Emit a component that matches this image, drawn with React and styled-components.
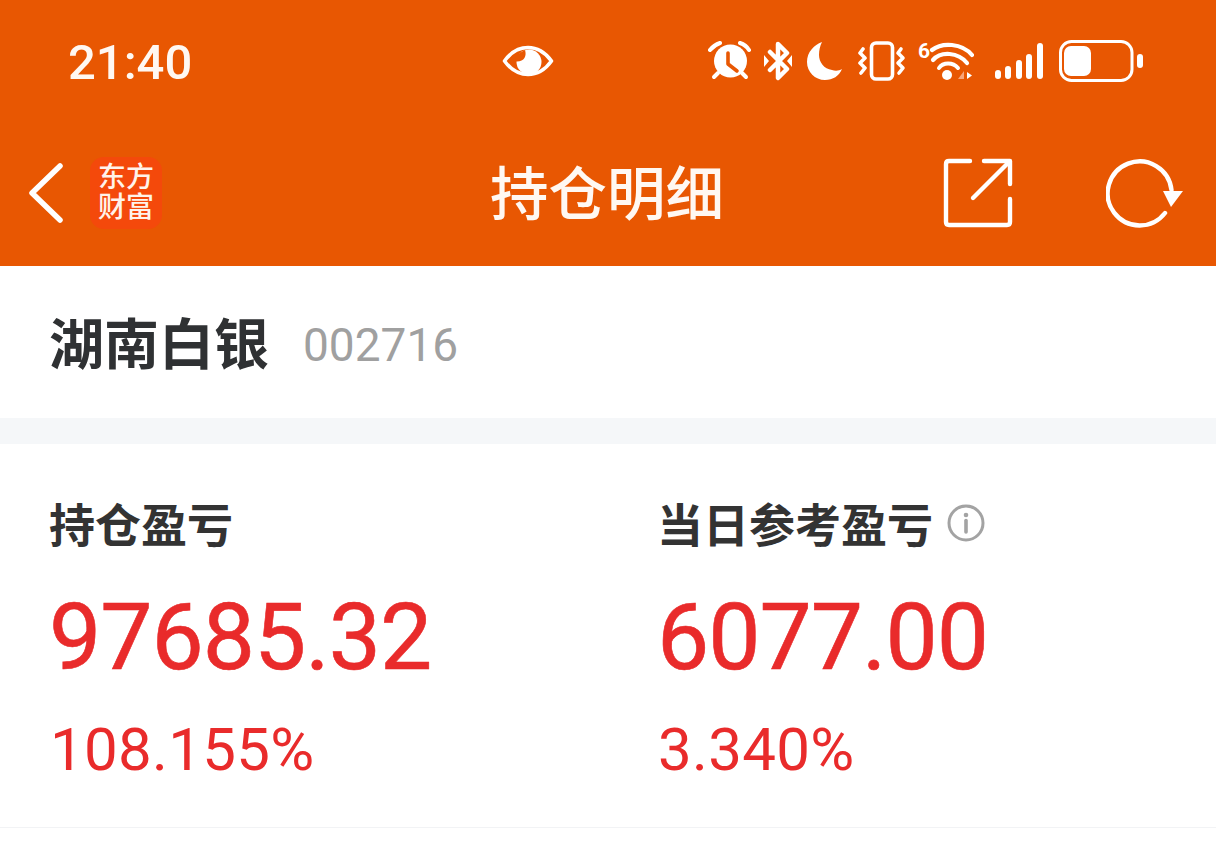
import React from "react";
import styled, { createGlobalStyle } from "styled-components";

const GlobalStyle = createGlobalStyle`
  html, body {
    margin: 0;
    padding: 0;
    background: #ffffff;
    font-family: Roboto, "Noto Sans CJK SC", sans-serif;
  }
`;

const Page = styled.div`
  width: 1216px;
  height: 854px;
  overflow: hidden;
  background: #ffffff;
`;

const TopArea = styled.div`
  background: #e85702;
  height: 266px;
  color: #ffffff;
`;

const StatusBar = styled.div`
  height: 122px;
  display: grid;
  grid-template-columns: 434px 124px 1fr;
  align-items: center;
  padding-left: 68px;
  padding-right: 73px;
`;

const Time = styled.div`
  font-size: 49px;
  font-weight: 500;
  line-height: 1;
  margin-top: 3px;
  color: #fff8f2;
`;

const StatusIcons = styled.div`
  display: flex;
  justify-content: flex-end;
  align-items: center;
  height: 50px;
`;

const Icon = styled.svg`
  display: block;
  flex: none;
  margin-left: ${(p) => p.$ml || 0}px;
  margin-bottom: ${(p) => p.$mb || 0}px;
`;

const NavBar = styled.div`
  height: 144px;
  display: grid;
  grid-template-columns: 1fr auto 1fr;
  align-items: center;
  padding: 0 32px 0 28px;
`;

const NavLeft = styled.div`
  display: flex;
  align-items: center;
  gap: 26px;
  margin-top: -2px;
`;

const NavRight = styled.div`
  display: flex;
  justify-content: flex-end;
  align-items: center;
  gap: 93px;
  margin-top: -2px;
`;

const Logo = styled.div`
  width: 72px;
  height: 72px;
  border-radius: 14px;
  background: #f4490b;
  display: grid;
  grid-template-columns: 28px 28px;
  justify-content: center;
  align-content: center;
  font-size: 28px;
  line-height: 30px;
  font-weight: 500;
  text-align: center;
  color: #fff3ea;
`;

const Title = styled.div`
  font-size: 58.5px;
  line-height: 1;
  font-weight: 500;
  margin-top: 2px;
  padding-left: 2px;
  color: #fff8f2;
`;

const StockRow = styled.div`
  height: 152px;
  box-sizing: border-box;
  padding: 6px 0 0 49px;
  display: flex;
  align-items: center;
  gap: 34px;
`;

const StockName = styled.div`
  font-size: 55px;
  font-weight: 700;
  line-height: 1;
  color: #2f3133;
`;

const StockCode = styled.div`
  font-size: 46px;
  line-height: 1;
  color: #a0a0a0;
`;

const Gap = styled.div`
  height: 26px;
  background: #f5f7f9;
`;

const Stats = styled.div`
  height: 383px;
  display: grid;
  grid-template-columns: 608px 1fr;
  padding-left: 50px;
  border-bottom: 1px solid #f2f3f5;
`;

const Stat = styled.div`
  display: flex;
  flex-direction: column;
  padding-top: 57px;
`;

const LabelRow = styled.div`
  display: flex;
  align-items: center;
  height: 50px;
  gap: 14px;
  margin-left: -1px;
`;

const Label = styled.div`
  font-size: 46px;
  font-weight: 700;
  line-height: 1;
  color: #333333;
`;

const Value = styled.div`
  font-size: 93px;
  font-weight: 400;
  letter-spacing: -1px;
  line-height: 1;
  margin-top: 40px;
  margin-left: -1px;
  color: #e92b2b;
  -webkit-text-stroke: 0.6px #e92b2b;
`;

const Percent = styled.div`
  font-size: 60px;
  letter-spacing: 0.3px;
  line-height: 1;
  margin-top: 36px;
  color: #e92b2b;
`;

const AlarmIcon = () => (
  <Icon width="43" height="42" viewBox="0 0 43 42" fill="none">
    <circle cx="22.500" cy="21" r="16.500" fill="#fff" />
    <path d="M20 13 V24 L29 31" stroke="#e85702" strokeWidth="3.600" strokeLinecap="round" strokeLinejoin="round" />
    <path d="M2 10 Q6 5 12 3 M32 3 Q38 5 41 10" stroke="#fff" strokeWidth="4" strokeLinecap="round" />
    <path d="M10 33 L6 37 M34 33 L38 37" stroke="#fff" strokeWidth="4" strokeLinecap="round" />
  </Icon>
);

const BluetoothIcon = () => (
  <Icon width="30" height="40" viewBox="0 0 30 40" fill="none" $ml={12}>
    <path d="M7 11 L24 28 L15 37 V3 L24 12 L7 29" stroke="#fff" strokeWidth="4.500" strokeLinejoin="round" strokeLinecap="round" />
    <path d="M1 14 L6 20 L1 26 Z M29 14 L24 20 L29 26 Z" fill="#fff" />
  </Icon>
);

const MoonIcon = () => (
  <Icon width="38" height="40" viewBox="0 0 38 40" $ml={13}>
    <path d="M16 1 C8 4 1 11 1 21 C1 31 9 39 19 39 C27 39 33 35 36 28 C33 30 29 30 26 29 C18 28 13 21 13 14 C13 9 14 5 16 1 Z" fill="#fff" />
  </Icon>
);

const VibrateIcon = () => (
  <Icon width="48" height="40" viewBox="0 0 48 40" fill="none" $ml={14}>
    <rect x="13.500" y="2" width="21" height="36" rx="4.500" stroke="#fff" strokeWidth="3.600" />
    <path d="M5 8 L2 12 L7 17 L2 22 L7 27 L3 32" stroke="#fff" strokeWidth="3.600" strokeLinejoin="round" strokeLinecap="round" />
    <path d="M43 8 L40 12 L45 17 L40 22 L45 27 L41 32" stroke="#fff" strokeWidth="3.600" strokeLinejoin="round" strokeLinecap="round" />
  </Icon>
);

const WifiIcon = () => (
  <Icon width="56" height="44" viewBox="0 0 56 44" fill="none" $ml={12}>
    <text x="0" y="19" fill="#fff" fontSize="21" fontWeight="700" fontFamily="Roboto, sans-serif">6</text>
    <path d="M14 11 C24 3 44 4 54 16" stroke="#fff" strokeWidth="4.200" strokeLinecap="round" />
    <path d="M15 21 C23 12 40 13 49 24" stroke="#fff" strokeWidth="4.200" strokeLinecap="round" />
    <path d="M21 29 C25 23 35 23 40 29" stroke="#fff" strokeWidth="4" strokeLinecap="round" />
    <circle cx="29" cy="36" r="5" fill="#fff" />
    <path d="M46 32 V40 H40 Z" fill="#f7a67c" />
    <path d="M49 33 L54 36.500 L49 40 Z" fill="#fff" />
  </Icon>
);

const SignalIcon = () => (
  <Icon width="50" height="40" viewBox="0 0 50 40" $ml={20}>
    <rect x="1" y="29" width="6" height="9" rx="3" fill="#fff" />
    <rect x="11" y="25" width="6" height="13" rx="3" fill="#fff" />
    <rect x="22" y="19" width="6" height="19" rx="3" fill="#fff" />
    <rect x="32" y="13" width="6" height="25" rx="3" fill="#fff" />
    <rect x="43" y="2" width="6" height="36" rx="3" fill="#fff" />
  </Icon>
);

const BatteryIcon = () => (
  <Icon width="84" height="42" viewBox="0 0 84 42" fill="none" $ml={15}>
    <rect x="1.500" y="1.500" width="71.500" height="39" rx="11" stroke="#fff" strokeWidth="3" />
    <rect x="5" y="6" width="27" height="30" rx="7" fill="#fff" />
    <rect x="78" y="14" width="6" height="14" rx="3" fill="#fff" />
  </Icon>
);

const EyeIcon = () => (
  <Icon width="52" height="34" viewBox="0 0 52 34" fill="none">
    <path d="M2.500 17 C9 8 17 3.500 26 3.500 C35 3.500 43 8 49.500 17 C43 26 35 30.500 26 30.500 C17 30.500 9 26 2.500 17 Z" stroke="#fff" strokeWidth="3.600" strokeLinejoin="round" />
    <circle cx="27" cy="18" r="12.500" fill="#fff" />
    <path d="M23 6 C25 12 22 18 14 17.500 L13.500 13 C16 10 19 8 23 6 Z" fill="#e85702" />
  </Icon>
);

const BackIcon = () => (
  <Icon width="36" height="60" viewBox="0 0 36 60" fill="none">
    <path d="M32 3 L4 30 L32 57" stroke="#fff" strokeWidth="5.500" strokeLinecap="round" strokeLinejoin="round" />
  </Icon>
);

const ShareIcon = () => (
  <Icon width="70" height="70" viewBox="0 0 70 70" fill="none">
    <path d="M27 3 H6 Q3 3 3 6 V64 Q3 67 6 67 H64 Q67 67 67 64 V41" stroke="#fff" strokeWidth="4.400" strokeLinecap="round" />
    <path d="M41 3 H67 V26" stroke="#fff" strokeWidth="4.400" strokeLinecap="round" strokeLinejoin="round" />
    <path d="M66 4 L30 40" stroke="#fff" strokeWidth="4.400" strokeLinecap="round" />
  </Icon>
);

const RefreshIcon = () => (
  <Icon width="78" height="70" viewBox="0 0 78 70" fill="none">
    <path d="M59 55 A32 32 0 1 1 65.500 32" stroke="#fff" strokeWidth="4.400" strokeLinecap="round" />
    <path d="M57 33 H77 L65 49 Z" fill="#fff" />
  </Icon>
);

const InfoIcon = () => (
  <Icon width="38" height="38" viewBox="0 0 38 38" fill="none" $mb={6}>
    <circle cx="19" cy="19" r="17" stroke="#a3a3a3" strokeWidth="3" />
    <circle cx="19" cy="11" r="2.300" fill="#a3a3a3" />
    <path d="M19 16.500 V28" stroke="#a3a3a3" strokeWidth="3.600" strokeLinecap="round" />
  </Icon>
);

const App = () => {
  return (
    <Page>
      <GlobalStyle />
      <TopArea>
        <StatusBar>
          <Time>21:40</Time>
          <EyeIcon />
          <StatusIcons>
            <AlarmIcon />
            <BluetoothIcon />
            <MoonIcon />
            <VibrateIcon />
            <WifiIcon />
            <SignalIcon />
            <BatteryIcon />
          </StatusIcons>
        </StatusBar>
        <NavBar>
          <NavLeft>
            <BackIcon />
            <Logo>
              <span>东</span>
              <span>方</span>
              <span>财</span>
              <span>富</span>
            </Logo>
          </NavLeft>
          <Title>持仓明细</Title>
          <NavRight>
            <ShareIcon />
            <RefreshIcon />
          </NavRight>
        </NavBar>
      </TopArea>
      <StockRow>
        <StockName>湖南白银</StockName>
        <StockCode>002716</StockCode>
      </StockRow>
      <Gap />
      <Stats>
        <Stat>
          <LabelRow>
            <Label>持仓盈亏</Label>
          </LabelRow>
          <Value>97685.32</Value>
          <Percent>108.155%</Percent>
        </Stat>
        <Stat>
          <LabelRow>
            <Label>当日参考盈亏</Label>
            <InfoIcon />
          </LabelRow>
          <Value>6077.00</Value>
          <Percent>3.340%</Percent>
        </Stat>
      </Stats>
    </Page>
  );
};

export default App;
